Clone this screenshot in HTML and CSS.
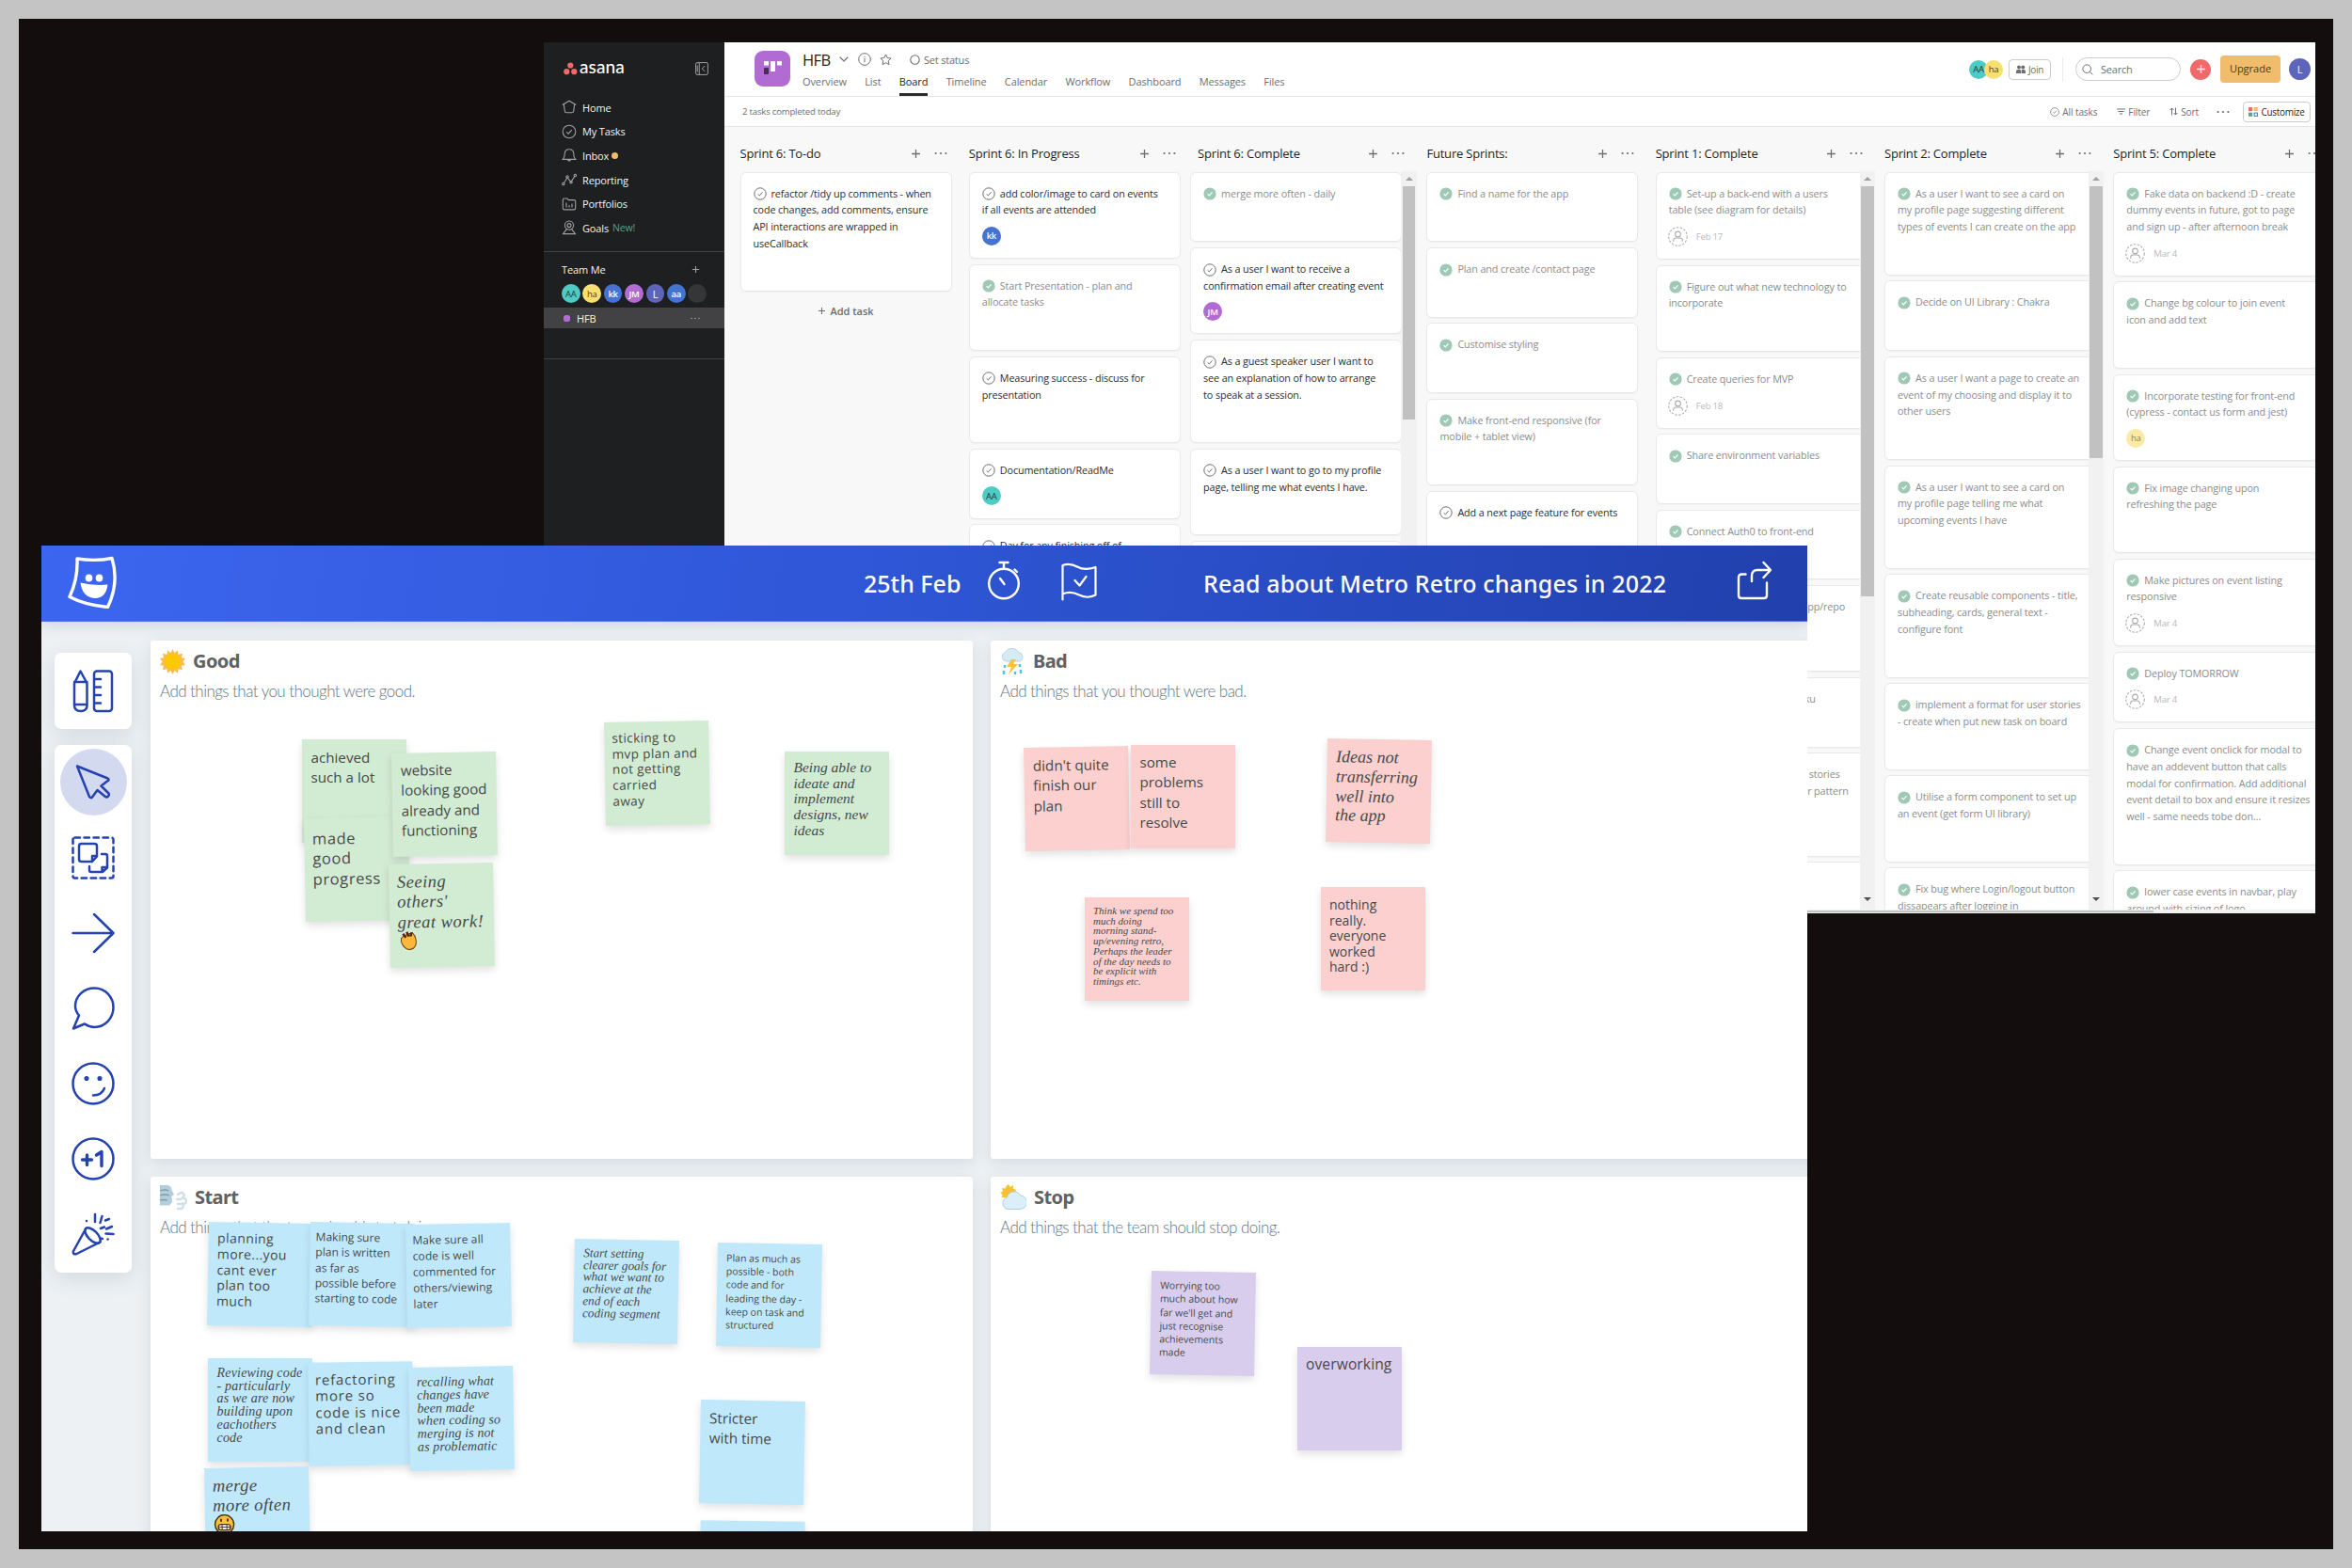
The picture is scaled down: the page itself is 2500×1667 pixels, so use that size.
FILE: index.html
```html
<!DOCTYPE html>
<html lang="en">
<head>
<meta charset="utf-8">
<title>Sprint board and retro</title>
<link rel="stylesheet" href="styles.css">
</head>
<body>
<svg class="defs" aria-hidden="true">
  <symbol id="todo" viewBox="0 0 14 14"><circle cx="7" cy="7" r="6.2" fill="none" stroke="#6d6e6f" stroke-width="1"/><path d="M4.6 7.3l1.7 1.6 3.2-3.6" fill="none" stroke="#6d6e6f" stroke-width="1"/></symbol>
  <symbol id="done" viewBox="0 0 14 14"><circle cx="7" cy="7" r="6.6" fill="#9fc9b5"/><path d="M4.6 7.3l1.7 1.6 3.2-3.6" fill="none" stroke="#fff" stroke-width="1.2"/></symbol>
  <symbol id="person" viewBox="0 0 20 20"><circle cx="10" cy="10" r="9.3" fill="none" stroke="#a9aaab" stroke-width="1" stroke-dasharray="2.4 1.4"/><circle cx="10" cy="7.6" r="2.7" fill="none" stroke="#a9aaab"/><path d="M5.4 15v-1.2a2.6 2.6 0 0 1 2.6-2.4h4a2.6 2.6 0 0 1 2.6 2.4V15" fill="none" stroke="#a9aaab"/></symbol>
  <symbol id="plus" viewBox="0 0 12 12"><path d="M6 1.2v9.6M1.2 6h9.6" stroke="currentColor" stroke-width="1.4" fill="none"/></symbol>
  <symbol id="dots" viewBox="0 0 14 4"><circle cx="1.6" cy="2" r="1.1" fill="currentColor"/><circle cx="7" cy="2" r="1.1" fill="currentColor"/><circle cx="12.4" cy="2" r="1.1" fill="currentColor"/></symbol>
</svg>

<main class="frame">

<section class="asana">
  <aside class="side">
    <div class="brand">
      <svg class="brand-mark" width="15" height="14" viewBox="0 0 15 14"><circle cx="7.3" cy="3.5" r="3.1" fill="#f06a6a"/><circle cx="3.3" cy="10.2" r="3.1" fill="#f06a6a"/><circle cx="11.3" cy="10.2" r="3.1" fill="#f06a6a"/></svg>
      <span class="brand-name">asana</span>
      <svg class="collapse" width="14" height="14" viewBox="0 0 14 14" fill="none" stroke="#a2a0a2"><rect x=".6" y=".6" width="12.8" height="12.8" rx="1.5"/><path d="M4.2.6v12.8M2.2 3.5v7M10.2 4L7.2 7l3 3"/></svg>
    </div>
    <nav class="menu">
      <a><svg width="16" height="16" viewBox="0 0 16 16"><path d="M.8 5.4L8 1.2l7.2 4.2M2.3 4.8l1 7.4q.2 1.6 1.8 1.6h5.8q1.6 0 1.8-1.6l1-7.4"/></svg>Home</a>
      <a><svg width="16" height="16" viewBox="0 0 16 16"><circle cx="8" cy="8" r="6.8"/><path d="M5.2 8.3l1.9 1.8 3.7-4"/></svg>My Tasks</a>
      <a><svg width="16" height="16" viewBox="0 0 16 16"><path d="M1.2 12.4q2-1.6 2-5.4 0-5.2 4.8-5.2T12.800 7q0 3.800 2 5.400zM6.200 12.600q1.800 2.600 3.600 0"/></svg>Inbox<i class="unread"></i></a>
      <a><svg width="16" height="16" viewBox="0 0 16 16"><path d="M2.300 11.800L6 5.800l4 4.500 4-6"/><circle cx="1.800" cy="12.400" r="1.200"/><circle cx="6" cy="5" r="1.200"/><circle cx="10" cy="10.800" r="1.200"/><circle cx="14.300" cy="3.500" r="1.200"/></svg>Reporting</a>
      <a><svg width="16" height="16" viewBox="0 0 16 16"><path d="M1.300 4V3.500q0-1.500 1.500-1.500h3l1.500 1.600h5.700q1.700 0 1.700 1.600v7q0 1.700-1.700 1.700H3q-1.700 0-1.700-1.700zM5 6.500v5M8 9v2.500M11 7.500v4"/></svg>Portfolios</a>
      <a><svg width="16" height="16" viewBox="0 0 16 16"><circle cx="8" cy="5.600" r="4.600"/><circle cx="8" cy="5.600" r="2"/><path d="M5.500 9.400L1.500 14.600h13L10.500 9.400"/></svg>Goals<em>New!</em></a>
    </nav>
    <div class="team">
      <div class="team-head"><span>Team Me</span><svg width="9" height="9"><use href="#plus"/></svg></div>
      <div class="people">
        <span class="av teal">AA</span><span class="av yellow">ha</span><span class="av blue">kk</span><span class="av violet">JM</span><span class="av indigo">L</span><span class="av blue">aa</span><span class="av ghost"></span>
      </div>
      <div class="project"><i></i><span>HFB</span><svg width="10" height="3"><use href="#dots"/></svg></div>
    </div>
  </aside>

  <div class="work">
    <header class="top">
      <svg class="tile" width="38" height="38" viewBox="0 0 38 38"><rect width="38" height="38" rx="9" fill="#b36bd4"/><rect x="10" y="11" width="5" height="4.500" fill="#fff"/><rect x="10" y="18" width="5" height="7" rx=".8" fill="#4a2a5c"/><rect x="17" y="11" width="5" height="11" fill="#fff"/><rect x="24" y="11" width="5" height="4.500" fill="#fff"/></svg>
      <div class="heading">
        <div class="title-row">
          <h1>HFB</h1>
          <svg class="chev" width="10" height="6" viewBox="0 0 10 6"><path d="M.7.7L5 4.900 9.300.7" fill="none" stroke="#6d6e6f" stroke-width="1.200"/></svg>
          <svg class="info" width="14" height="14" viewBox="0 0 14 14" fill="none" stroke="#6d6e6f"><circle cx="7" cy="7" r="6.300"/><path d="M7 6v4.300M7 3.700v1.200"/></svg>
          <svg class="star" width="13" height="13" viewBox="0 0 13 13"><path d="M6.500.9l1.700 3.600 3.900.5-2.900 2.700.8 3.900-3.500-1.900L3 11.600l.8-3.900L.9 5l3.900-.5z" fill="none" stroke="#6d6e6f" stroke-linejoin="round"/></svg>
          <svg class="ring" width="11" height="11" viewBox="0 0 11 11"><circle cx="5.500" cy="5.500" r="4.700" fill="none" stroke="#6d6e6f" stroke-width="1.100"/></svg>
          <span class="status">Set status</span>
        </div>
        <div class="tabs"><a>Overview</a><a>List</a><a class="on">Board</a><a>Timeline</a><a>Calendar</a><a>Workflow</a><a>Dashboard</a><a>Messages</a><a>Files</a></div>
      </div>
      <div class="actions">
        <span class="av teal">AA</span><span class="av yellow lap">ha</span>
        <span class="join"><svg width="10" height="10" viewBox="0 0 10 10" fill="#6d6e6f"><circle cx="3" cy="2.500" r="2"/><circle cx="7.300" cy="2.500" r="2"/><path d="M0 9V7q0-2 2-2h2q1 0 1 1.500V9zM5.600 9V6q0-1 1-1H8q2 0 2 2v2z"/></svg>Join</span>
        <i class="rule"></i>
        <span class="search"><svg width="12" height="12" viewBox="0 0 12 12"><circle cx="5.200" cy="5.200" r="4.300" fill="none" stroke="#6d6e6f"/><path d="M8.300 8.300l3 3" stroke="#6d6e6f"/></svg>Search</span>
        <span class="add"><svg width="11" height="11"><use href="#plus"/></svg></span>
        <span class="upgrade">Upgrade</span>
        <span class="av indigo me">L</span>
      </div>
    </header>
    <div class="bar">
      <span class="count">2 tasks completed today</span>
      <div class="filters">
        <span><svg width="10" height="10"><use href="#todo"/></svg>All tasks</span>
        <span class="f2"><svg width="9" height="8" viewBox="0 0 9 8"><path d="M0 1h9M1.500 3.500h6M3 6h3" stroke="#6d6e6f"/></svg>Filter</span>
        <span class="f3"><svg width="9" height="9" viewBox="0 0 9 9"><path d="M2.500 8.500V1M.5 3l2-2 2 2M6.500.5V8M4.700 6l1.800 2 2-2" fill="none" stroke="#6d6e6f"/></svg>Sort</span>
        <svg class="more" width="14" height="4"><use href="#dots"/></svg>
        <span class="custom"><svg width="10" height="10" viewBox="0 0 10 10"><rect width="4.200" height="4.200" fill="#f06a6a"/><rect x="5.600" width="4.200" height="4.200" fill="#f1bd6c"/><rect y="5.600" width="4.200" height="4.200" fill="#5da283"/><rect x="6.100" y="6.100" width="3.300" height="3.300" fill="none" stroke="#4573d2"/></svg>Customize</span>
      </div>
    </div>

    <div class="board">
      <section class="col">
        <h2>Sprint 6: To-do<svg class="p" width="11" height="11"><use href="#plus"/></svg><svg class="d" width="14" height="4"><use href="#dots"/></svg></h2>
        <div class="lane"><div class="cards">
          <article class="tall"><p><svg><use href="#todo"/></svg>refactor /tidy up comments - when<br>code changes, add comments, ensure<br>API interactions are wrapped in<br>useCallback</p></article>
          <div class="addtask"><svg width="9" height="9"><use href="#plus"/></svg>Add task</div>
        </div></div>
      </section>
      <section class="col">
        <h2>Sprint 6: In Progress<svg class="p" width="11" height="11"><use href="#plus"/></svg><svg class="d" width="14" height="4"><use href="#dots"/></svg></h2>
        <div class="lane"><div class="cards">
          <article><p><svg><use href="#todo"/></svg>add color/image to card on events<br>if all events are attended</p><footer><span class="av blue">kk</span></footer></article>
          <article class="dim"><p><svg><use href="#done"/></svg>Start Presentation - plan and<br>allocate tasks</p><footer></footer></article>
          <article><p><svg><use href="#todo"/></svg>Measuring success - discuss for<br>presentation</p><footer></footer></article>
          <article><p><svg><use href="#todo"/></svg>Documentation/ReadMe</p><footer><span class="av teal">AA</span></footer></article>
          <article><p><svg><use href="#todo"/></svg>Day for any finishing off of</p><footer></footer></article>
        </div></div>
      </section>
      <section class="col shift">
        <h2>Sprint 6: Complete<svg class="p" width="11" height="11"><use href="#plus"/></svg><svg class="d" width="14" height="4"><use href="#dots"/></svg></h2>
        <div class="lane"><div class="cards">
          <article class="dim"><p><svg><use href="#done"/></svg>merge more often - daily</p><footer></footer></article>
          <article><p><svg><use href="#todo"/></svg>As a user I want to receive a<br>confirmation email after creating event</p><footer><span class="av violet">JM</span></footer></article>
          <article><p><svg><use href="#todo"/></svg>As a guest speaker user I want to<br>see an explanation of how to arrange<br>to speak at a session.</p><footer></footer></article>
          <article><p><svg><use href="#todo"/></svg>As a user I want to go to my profile<br>page, telling me what events I have.</p><footer></footer></article>
          <article><p></p><footer></footer></article>
        </div><div class="track"><i class="up"></i><i class="thumb t1"></i></div></div>
      </section>
      <section class="col">
        <h2>Future Sprints:<svg class="p" width="11" height="11"><use href="#plus"/></svg><svg class="d" width="14" height="4"><use href="#dots"/></svg></h2>
        <div class="lane"><div class="cards">
          <article class="dim"><p><svg><use href="#done"/></svg>Find a name for the app</p><footer></footer></article>
          <article class="dim"><p><svg><use href="#done"/></svg>Plan and create /contact page</p><footer></footer></article>
          <article class="dim"><p><svg><use href="#done"/></svg>Customise styling</p><footer></footer></article>
          <article class="dim"><p><svg><use href="#done"/></svg>Make front-end responsive (for<br>mobile + tablet view)</p><footer></footer></article>
          <article><p><svg><use href="#todo"/></svg>Add a next page feature for events</p><footer></footer></article>
        </div></div>
      </section>
      <section class="col cut">
        <h2>Sprint 1: Complete<svg class="p" width="11" height="11"><use href="#plus"/></svg><svg class="d" width="14" height="4"><use href="#dots"/></svg></h2>
        <div class="lane"><div class="cards">
          <article class="dim"><p><svg><use href="#done"/></svg>Set-up a back-end with a users<br>table (see diagram for details)</p><footer class="date"><svg class="who"><use href="#person"/></svg>Feb 17</footer></article>
          <article class="dim"><p><svg><use href="#done"/></svg>Figure out what new technology to<br>incorporate</p><footer></footer></article>
          <article class="dim"><p><svg><use href="#done"/></svg>Create queries for MVP</p><footer class="date"><svg class="who"><use href="#person"/></svg>Feb 18</footer></article>
          <article class="dim"><p><svg><use href="#done"/></svg>Share environment variables</p><footer></footer></article>
          <article class="dim"><p><svg><use href="#done"/></svg>Connect Auth0 to front-end</p><footer></footer></article>
          <article class="dim"><p class="tail r1">app/repo<br>&nbsp;</p><footer></footer></article>
          <article class="dim"><p class="tail r2">ku</p><footer></footer></article>
          <article class="dim"><p class="tail r3"><span>stories</span><br>r pattern<br>&nbsp;</p><footer></footer></article>
          <article class="dim"><p></p><footer></footer></article>
        </div><div class="track"><i class="up"></i><i class="thumb t2"></i><i class="down"></i></div></div>
      </section>
      <section class="col cut">
        <h2>Sprint 2: Complete<svg class="p" width="11" height="11"><use href="#plus"/></svg><svg class="d" width="14" height="4"><use href="#dots"/></svg></h2>
        <div class="lane"><div class="cards">
          <article class="dim"><p><svg><use href="#done"/></svg>As a user I want to see a card on<br>my profile page suggesting different<br>types of events I can create on the app</p><footer></footer></article>
          <article class="dim"><p><svg><use href="#done"/></svg>Decide on UI Library : Chakra</p><footer></footer></article>
          <article class="dim"><p><svg><use href="#done"/></svg>As a user I want a page to create an<br>event of my choosing and display it to<br>other users</p><footer></footer></article>
          <article class="dim"><p><svg><use href="#done"/></svg>As a user I want to see a card on<br>my profile page telling me what<br>upcoming events I have</p><footer></footer></article>
          <article class="dim"><p><svg><use href="#done"/></svg>Create reusable components - title,<br>subheading, cards, general text -<br>configure font</p><footer></footer></article>
          <article class="dim"><p><svg><use href="#done"/></svg>implement a format for user stories<br>- create when put new task on board</p><footer></footer></article>
          <article class="dim"><p><svg><use href="#done"/></svg>Utilise a form component to set up<br>an event (get form UI library)</p><footer></footer></article>
          <article class="dim"><p><svg><use href="#done"/></svg>Fix bug where Login/logout button<br>dissapears after logging in</p><footer></footer></article>
        </div><div class="track"><i class="up"></i><i class="thumb t3"></i><i class="down"></i></div></div>
      </section>
      <section class="col">
        <h2>Sprint 5: Complete<svg class="p" width="11" height="11"><use href="#plus"/></svg><svg class="d" width="14" height="4"><use href="#dots"/></svg></h2>
        <div class="lane"><div class="cards">
          <article class="dim"><p><svg><use href="#done"/></svg>Fake data on backend :D - create<br>dummy events in future, got to page<br>and sign up - after afternoon break</p><footer class="date"><svg class="who"><use href="#person"/></svg>Mar 4</footer></article>
          <article class="dim"><p><svg><use href="#done"/></svg>Change bg colour to join event<br>icon and add text</p><footer></footer></article>
          <article class="dim"><p><svg><use href="#done"/></svg>Incorporate testing for front-end<br>(cypress - contact us form and jest)</p><footer><span class="av yellow faint">ha</span></footer></article>
          <article class="dim"><p><svg><use href="#done"/></svg>Fix image changing upon<br>refreshing the page</p><footer></footer></article>
          <article class="dim"><p><svg><use href="#done"/></svg>Make pictures on event listing<br>responsive</p><footer class="date"><svg class="who"><use href="#person"/></svg>Mar 4</footer></article>
          <article class="dim"><p><svg><use href="#done"/></svg>Deploy TOMORROW</p><footer class="date"><svg class="who"><use href="#person"/></svg>Mar 4</footer></article>
          <article class="dim"><p><svg><use href="#done"/></svg>Change event onclick for modal to<br>have an addevent button that calls<br>modal for confirmation. Add additional<br>event detail to box and ensure it resizes<br>well - same needs tobe don...</p><footer></footer></article>
          <article class="dim"><p><svg><use href="#done"/></svg>lower case events in navbar, play<br>around with sizing of logo</p><footer></footer></article>
        </div></div>
      </section>
    </div>
    <div class="hscroll"><i></i></div>
  </div>
</section>

<section class="retro">
  <header class="rhead">
    <svg class="rlogo" width="54" height="56" viewBox="0 0 54 56"><path d="M10 3q19 3 37-.5 8 26-4.500 52Q18 52 2 43.500 11 24 10 3z" fill="none" stroke="#fff" stroke-width="3.400" stroke-linejoin="round"/><ellipse cx="22.500" cy="23.500" rx="3.800" ry="4" fill="#fff"/><ellipse cx="33.500" cy="23.500" rx="3.800" ry="4" fill="#fff"/><path d="M13.500 28.500q14 3.500 29 2-2 15-14 14.500-13-1-15-16.500z" fill="#fff"/></svg>
    <span class="rdate">25th Feb</span>
    <svg class="watch" width="36" height="42" viewBox="0 0 36 42" fill="none" stroke="#fff" stroke-width="2.400" stroke-linecap="round"><circle cx="18" cy="24.500" r="15.800"/><path d="M13.500 2h9M18 2v6.500M29.500 9.500l2.500 2.500M14 19l4.500 6"/></svg>
    <svg class="map" width="38" height="41" viewBox="0 0 38 41" fill="none" stroke="#fff" stroke-width="2.200" stroke-linecap="round" stroke-linejoin="round"><path d="M1.500 39.500V3Q9 0 17 4.500T36.500 5V34.500Q28 39 19 34.500T1.500 33.500M14.500 19l5 5.500 7-9.500"/></svg>
    <span class="rnews">Read about Metro Retro changes in 2022</span>
    <svg class="share" width="38" height="42" viewBox="0 0 38 42" fill="none" stroke="#fff" stroke-width="2.400" stroke-linecap="round" stroke-linejoin="round"><path d="M9.500 14.500H5.500Q2 14.500 2 18v19q0 3 3 3h24q3 0 3-3V23.500M16 22v-6q0-6 6-6h13.500M28.500 2l7.500 8-7.500 8"/></svg>
  </header>
  <div class="canvas">
    <div class="tools">
      <div class="tbox one">
        <svg width="46" height="46" viewBox="0 0 46 46"><path d="M3 14.500L9.500 1.500 16.500 14.500V38q0 6-6.700 6T3 38zM3 13h13.500M3 37h13.500"/><rect x="24" y="1.500" width="19" height="42.500" rx="3"/><path d="M25 10h6M25 18.500h6M25 27h6M25 35.500h6"/></svg>
      </div>
      <div class="tbox many">
        <span class="tool sel"><svg width="46" height="46" viewBox="0 0 46 46"><path d="M6 5.500L38.500 18.500Q41 20 38 21.500L31.500 26.500 39.500 34.500Q40.500 36 39 37.500 37.500 39 36 38L27.500 31 22 38.500Q20.500 40 19 38z"/></svg></span>
        <span class="tool"><svg width="46" height="46" viewBox="0 0 46 46"><rect x="1.500" y="1.500" width="43" height="43" rx="2" stroke-dasharray="5.500 4.500"/><path d="M10.500 8h14q2.500 0 2.500 2.500v11L22 27H10.500Q8 27 8 24.500v-14Q8 8 10.500 8zM22 26v-5h5M32 19h4q2 0 2 2v12.500L33 38H21q-2 0-2-2v-4M32.500 38v-5H38"/></svg></span>
        <span class="tool"><svg width="46" height="46" viewBox="0 0 46 46"><path d="M1.500 23H44M24 3l20.500 20L24 43"/></svg></span>
        <span class="tool"><svg width="46" height="46" viewBox="0 0 46 46"><path d="M2 44.500l6-14Q4 26 4 20.500C4 10 13 1.500 24.500 1.500S44.500 11 44.500 22 36 43 24.500 43q-5.500 0-10.500-3.500z"/></svg></span>
        <span class="tool"><svg width="46" height="46" viewBox="0 0 46 46"><circle cx="23" cy="23" r="21.500"/><path d="M23 35.500q9 0 12-7.500"/><circle class="f" cx="16" cy="17.500" r="1.300"/><circle class="f" cx="30" cy="17.500" r="1.300"/></svg></span>
        <span class="tool"><svg width="46" height="46" viewBox="0 0 46 46"><circle cx="23" cy="23" r="21.500"/><path d="M11.500 24h10M16.500 19v10.500M26.500 19l5.500-3.500V30.500" stroke-width="3.400"/></svg></span>
        <span class="tool"><svg width="46" height="46" viewBox="0 0 46 46"><path d="M14.500 18.500L1.800 41.500Q1.500 45 5.500 44L30.500 31.500"/><ellipse cx="22.500" cy="24.500" rx="5" ry="10.500" transform="rotate(-45 22.500 24.500)"/><path d="M25 2v8M32.500 4l-2 7M16 9v.1M40 7l-4 1.500M31 17l4-1.500M37 17.500l6-2.500M36.500 22.500l8 .5M32 27.500l1 .5M38.500 28.500h.2"/></svg></span>
      </div>
    </div>
    <div class="panels">
      <section class="panel">
        <h3><svg width="27" height="27" viewBox="0 0 27 27"><path d="M13.500 0l2 4L19 1.300l.5 4.500 4.500-1-1 4.400 4 .8-2.500 3.500 2.500 3.500-4.300.8L24 22.200l-4.500-1-.5 4.500-3.500-2.700-2 4-2-4L8 25.700l-.5-4.500-4.500 1 1-4.400L0 17l2.500-3.500L0 10l4-.8-1-4.400 4.500 1L8 1.300 11.500 4z" fill="#f9bd4e"/><circle cx="13.500" cy="13.500" r="8.300" fill="#fdc900"/></svg>Good</h3>
        <p>Add things that you thought were good.</p>
      </section>
      <section class="panel">
        <h3><svg width="27" height="29" viewBox="0 0 27 29"><path d="M6 14a5 5 0 0 1-.5-9.500 8 8 0 0 1 14 0 5 5 0 0 1 1.500 9.500z" fill="#d8ebf4" stroke="#b5d3e2"/><path d="M12 12l-5 8h5l-3 8 10-11h-5l3-5z" fill="#fdc23c"/><path d="M5 18v3M4 24v4M21 17v3M22 23v4M16 25v3" stroke="#4fc3ee" stroke-width="2.500"/></svg>Bad</h3>
        <p>Add things that you thought were bad.</p>
      </section>
      <section class="panel">
        <h3><svg width="29" height="28" viewBox="0 0 29 28"><path d="M0 1h7q5 0 5.500 5l2.500 5-2.500 2 .5 6-3 3.500H0z" fill="#b3cddb"/><path d="M0 7q6-2 9 0M0 12q6-2 10 0M0 17q5-1 8 0" stroke="#7e9dad" fill="none" stroke-width="1.300"/><path d="M19 11q4-3.500 6-1t-2 5q5-1 5 3t-5 2q3 2 1 5M18 16h4M19 21h3M19 26h4" fill="none" stroke="#cfdfe7" stroke-width="2.400" stroke-linecap="round"/></svg>Start</h3>
        <p>Add things that the team should start doing.</p>
      </section>
      <section class="panel">
        <h3><svg width="28" height="28" viewBox="0 0 28 28"><path d="M9 0l1.500 3L14 1l-.3 3.600L17 6l-3 8H4L1.500 14l1.200-3L0 9l3-1.500L2 4l3.500.6L7 1.500z" fill="#fbc02d"/><path d="M8 26.500a6.500 6.500 0 0 1-.5-12.500 7.500 7.500 0 0 1 14-2A7 7 0 0 1 21 26.500z" fill="#dceff8" stroke="#a9d0e4"/></svg>Stop</h3>
        <p>Add things that the team should stop doing.</p>
      </section>
    </div>

    <div class="note green n1">achieved<br>such a lot</div>
    <div class="note green n2">made<br>good<br>progress</div>
    <div class="note green n3">website<br>looking good<br>already and<br>functioning</div>
    <div class="note green hand n4">Seeing<br>others'<br>great work!<br><svg width="22" height="22" viewBox="0 0 22 22"><path d="M3 8Q5 5 9 4l6-2q3 3 3.500 7 1.500 6-2.500 9.500-5 3-9-.5Q2.500 14 3 8z" fill="#fbb83a" stroke="#6b3a12"/><path d="M5 3l3 4M9 1l2 5M14 2l-1 4" stroke="#5a1f10" stroke-width="2.500"/></svg></div>
    <div class="note green n5">sticking to<br>mvp plan and<br>not getting<br>carried<br>away</div>
    <div class="note green hand n6">Being able to<br>ideate and<br>implement<br>designs, new<br>ideas</div>

    <div class="note pink n7">didn't quite<br>finish our<br>plan</div>
    <div class="note pink n8">some<br>problems<br>still to<br>resolve</div>
    <div class="note pink hand n9">Ideas not<br>transferring<br>well into<br>the app</div>
    <div class="note pink hand n10">Think we spend too<br>much doing<br>morning stand-<br>up/evening retro,<br>Perhaps the leader<br>of the day needs to<br>be explicit with<br>timings etc.</div>
    <div class="note pink n11">nothing<br>really.<br>everyone<br>worked<br>hard :)</div>

    <div class="note sky n12">planning<br>more...you<br>cant ever<br>plan too<br>much</div>
    <div class="note sky n13">Making sure<br>plan is written<br>as far as<br>possible before<br>starting to code</div>
    <div class="note sky n14">Make sure all<br>code is well<br>commented for<br>others/viewing<br>later</div>
    <div class="note sky hand n15">Start setting<br>clearer goals for<br>what we want to<br>achieve at the<br>end of each<br>coding segment</div>
    <div class="note sky n16">Plan as much as<br>possible - both<br>code and for<br>leading the day -<br>keep on task and<br>structured</div>
    <div class="note sky hand n17">Reviewing code<br>- particularly<br>as we are now<br>building upon<br>eachothers<br>code</div>
    <div class="note sky n18">refactoring<br>more so<br>code is nice<br>and clean</div>
    <div class="note sky hand n19">recalling what<br>changes have<br>been made<br>when coding so<br>merging is not<br>as problematic</div>
    <div class="note sky hand n20">merge<br>more often<br><svg width="23" height="22" viewBox="0 0 23 22"><circle cx="11.500" cy="11" r="10" fill="#fdc13a" stroke="#4a3517" stroke-width="1.500"/><path d="M8 5v3M15 5v3" stroke="#4a3517" stroke-width="2"/><rect x="5" y="11" width="13" height="6" rx="3" fill="#fff" stroke="#4a3517" stroke-width="1.300"/><path d="M5 14h13M9 11v6M14 11v6" stroke="#4a3517"/></svg></div>
    <div class="note sky n21">Stricter<br>with time</div>
    <div class="note sky n22"></div>

    <div class="note lilac n23">Worrying too<br>much about how<br>far we'll get and<br>just recognise<br>achievements<br>made</div>
    <div class="note lilac n24">overworking</div>
  </div>
</section>

</main>
</body>
</html>
```
FILE: styles.css
```css
* { box-sizing: border-box; }
body { margin: 0; padding: 20px; width: 2500px; height: 1667px; overflow: hidden; background: #c4c4c4; font-family: "Open Sans", "Noto Sans", sans-serif; }
h1, h2, h3, p { margin: 0; font-weight: 400; }
.defs { position: absolute; width: 0; height: 0; }
.frame { position: relative; width: 2460px; height: 1627px; background: #130d0d; overflow: hidden; }

/* Overlapping windows */
.asana { position: absolute; left: 558px; top: 25px; width: 1883px; height: 926px; display: flex; overflow: hidden; background: #f8f8f8; }
.retro { position: absolute; left: 24px; top: 560px; width: 1877px; height: 1048px; overflow: hidden; background: #edf1f4; }

/* Sidebar */
.side { flex: none; width: 192px; background: #1e1f21; color: #f5f4f3; font-size: 11px; letter-spacing: -0.15px; }
.brand { display: flex; align-items: center; height: 56.500px; padding: 0 17px 0 21px; }
.brand-name { margin-left: 2px; margin-top: -5px; font: 500 19px/20px "Lato", sans-serif; letter-spacing: .1px; color: #fff; }
.collapse { margin-left: auto; }
.menu a { display: flex; align-items: center; height: 25.6px; padding-left: 19px; font-weight: 500; }
.menu svg { width: 16px; margin-right: 6px; fill: none; stroke: #a2a0a2; stroke-width: 1.1; }
.menu em { margin-left: 4px; font-style: normal; font-size: 10.5px; font-weight: 400; color: #58a182; }
.unread { width: 7px; height: 7px; margin-left: 3px; border-radius: 50%; background: #f1bd6c; }
.team { height: 115px; margin-top: 12px; border-top: 1px solid #424244; border-bottom: 1px solid #424244; }
.team-head { display: flex; align-items: center; justify-content: space-between; height: 34px; padding: 2px 26px 0 19px; font-weight: 500; }
.team-head svg { color: #a2a0a2; }
.people { display: flex; gap: 2.800px; height: 25px; padding: 0 19px; }
.people .av { width: 19.6px; }
.project { display: flex; align-items: center; height: 22px; padding: 0 26px 0 21px; background: #424244; font-weight: 500; }
.project i { width: 7px; height: 7px; margin-right: 7px; border-radius: 2.500px; background: #b36bd4; }
.project svg { margin-left: auto; color: #a2a0a2; }

.av { flex: none; display: inline-flex; align-items: center; justify-content: center; width: 20px; height: 20px; border-radius: 50%; font-size: 9.500px; font-weight: 400; letter-spacing: -0.3px; color: #fff; }
.teal { background: #4ecbc4; color: #1e3b3a; }
.yellow { background: #f8df72; color: #4d4420; }
.blue { background: #4573d2; font-weight: 600; }
.violet { background: #b36bd4; font-weight: 600; }
.indigo { background: #5d65bb; font-size: 11px; }
.ghost { background: #353638; }
.faint { opacity: .65; }

/* Top bar */
.work { flex: 1; min-width: 0; display: flex; flex-direction: column; color: #6d6e6f; }
.top { display: flex; height: 58px; padding-left: 32px; background: #fff; border-bottom: 1px solid #e8e6e6; }
.tile { flex: none; margin-top: 9px; }
.heading { flex: none; margin-left: 13px; display: flex; flex-direction: column; justify-content: space-between; }
.title-row { display: flex; align-items: center; height: 37px; }
.title-row h1 { width: 29px; font-size: 16.500px; letter-spacing: -.6px; color: #1e1f21; }
.chev { margin-left: 10px; }
.info { margin-left: 10px; }
.star { margin-left: 9px; }
.ring { margin-left: 19px; }
.status { margin-left: 4px; font-size: 11px; letter-spacing: -.2px; }
.tabs { display: flex; gap: 19.300px; height: 21px; font-size: 11px; letter-spacing: -.1px; line-height: 12px; }
.tabs .on { color: #1e1f21; border-bottom: 3px solid #2a2b2d; }
.actions { display: flex; align-items: center; margin-left: auto; padding-right: 5px; font-size: 10px; }
.lap { margin-left: -4px; }
.join { display: flex; align-items: center; justify-content: center; gap: 3px; width: 45px; height: 22px; margin-left: 6px; border: 1px solid #cfcbcb; border-radius: 4px; letter-spacing: -.3px; }
.rule { width: 1px; height: 26px; margin: 0 13px 0 12px; background: #edeae9; }
.search { display: flex; align-items: center; gap: 8px; width: 112px; height: 25px; padding-left: 6px; border: 1px solid #cfcbcb; border-radius: 13px; font-size: 11px; letter-spacing: -.2px; }
.add { display: flex; align-items: center; justify-content: center; width: 22px; height: 22px; margin-left: 10px; border-radius: 50%; background: #f06a6a; color: #fff; }
.upgrade { width: 64px; height: 29px; margin-left: 10px; border-radius: 4px; background: #f1bd6c; color: #4a3a1a; font-size: 11px; line-height: 28px; text-align: center; }
.me { width: 23px; height: 23px; margin-left: 9px; }
.bar { display: flex; align-items: center; justify-content: space-between; height: 33px; padding: 0 5px 0 19px; background: #fff; border-bottom: 1px solid #e8e6e6; font-size: 9.600px; letter-spacing: -.2px; }
.filters { display: flex; align-items: center; font-size: 10px; letter-spacing: -.1px; }
.filters span { display: flex; align-items: center; gap: 3px; }
.filters .f2 { margin-left: 21px; }
.filters .f3 { margin-left: 21px; }
.more { margin: 0 14px 0 19px; }
.filters .custom { justify-content: center; width: 72px; height: 22px; border: 1px solid #cfcbcb; border-radius: 4px; letter-spacing: -.3px; color: #1e1f21; }

/* Board */
.board { flex: none; display: flex; height: 832px; padding-left: 16.500px; }
.col { flex: none; width: 243.300px; }
.col h2 { display: flex; align-items: center; height: 47px; padding: 9px 13px 0 0; font-size: 13px; letter-spacing: -.2px; color: #1e1f21; white-space: nowrap; }
.col h2 svg { color: #6d6e6f; }
.p { margin-left: auto; }
.d { margin: 0 10px 0 14px; }
.lane { display: flex; height: 785px; overflow: hidden; }
.cards { flex: none; width: 225px; }
.shift .cards { width: 224px; }
.cut .cards { width: 217px; overflow: hidden; }
article { width: 225px; padding: 13px 0 0 13px; margin-bottom: 5.700px; background: #fff; border: 1px solid #e9e8e8; border-radius: 6px; box-shadow: 0 1px 1px rgba(0,0,0,.03); }
article:first-child { margin-top: .5px; }
.shift .lane { margin-left: -8px; }
article p { min-height: 17.700px; font-size: 10.800px; line-height: 17.700px; letter-spacing: -.12px; color: #2b2c2e; white-space: nowrap; }
article p svg { width: 14px; height: 14px; margin-right: 5px; vertical-align: -3.500px; }
article footer { display: flex; align-items: center; height: 42px; padding-bottom: 4.500px; font-size: 9.600px; letter-spacing: -.2px; color: #b9babb; }
article .date { height: 43px; padding-bottom: 4px; }
.who { width: 21px; height: 21px; margin: 0 9px 0 -1px; }
.dim p { color: #8b8c8d; }
.tall { height: 127px; }
.addtask { display: flex; align-items: center; justify-content: center; gap: 4px; margin-top: 13px; font-size: 11px; font-weight: 600; }
.tail { text-align: right; }
.r1 { padding-right: 22.500px; }
.r2 { padding-right: 54px; }
.r3 { padding-right: 19px; }
.r3 span { margin-right: 9px; }
.track { position: relative; flex: none; width: 16.500px; background: #f1f1f1; }
.thumb { position: absolute; left: 1.500px; top: 16px; width: 13.500px; background: #c1c1c1; }
.t1 { height: 248px; }
.t2 { height: 436px; }
.t3 { height: 289px; }
.up, .down { position: absolute; left: 4.500px; border: 4px solid transparent; }
.up { top: 2px; border-bottom-color: #a0a0a0; }
.down { bottom: 5px; border-top-color: #505050; }
.hscroll { height: 4px; background: #f1f1f1; }
.hscroll i { display: block; width: 1519px; height: 2px; margin-top: 1px; background: #c1c1c1; }

/* Retro header */
.rhead { position: relative; z-index: 1; display: flex; align-items: center; height: 81px; padding-left: 28px; background: linear-gradient(100deg, #3c66f0, #2e55d4 50%, #2140ad); border-bottom: 1px solid #5577e4; box-shadow: 0 3px 14px rgba(40,60,90,.16); color: #fff; font-family: "Noto Sans", sans-serif; font-weight: 500; font-size: 25px; white-space: nowrap; }
.rlogo { flex: none; margin-top: -3px; }
.rdate { width: 104px; margin-left: 792px; }
.watch { flex: none; margin: -7px 0 0 27px; }
.map { flex: none; margin: -4px 0 0 43px; }
.rnews { width: 492px; margin-left: 113px; letter-spacing: .16px; }
.share { flex: none; margin: -6px 0 0 75px; }

/* Retro canvas */
.canvas { display: flex; align-items: flex-start; height: 967px; padding-left: 14px; }
.tools { flex: none; width: 82px; padding-top: 33px; }
.tbox { display: flex; flex-direction: column; align-items: center; background: #fff; border-radius: 7px; box-shadow: 0 6px 22px rgba(60,80,100,.15); }
.one { height: 81px; justify-content: center; padding-top: 0; }
.many { height: 561px; margin-top: 17px; padding-top: 4px; gap: 9px; }
.tbox svg { fill: none; stroke: #2443b0; stroke-width: 2.500; stroke-linecap: round; stroke-linejoin: round; }
.tbox .f { fill: #2443b0; }
.tool { display: flex; flex: none; align-items: center; justify-content: center; width: 71px; height: 71px; border-radius: 50%; }
.tool, .one { padding-right: 1px; }
.sel { background: #d3d9ef; }
.panels { flex: none; display: grid; grid-template-columns: 874px 880px; grid-template-rows: 551px 400px; gap: 19px; margin: 20px 0 0 20px; }
.panel { padding: 10px 0 0 10px; background: #fff; border-radius: 3px; box-shadow: 0 4px 16px rgba(60,80,100,.14); }
.panel h3 { display: flex; align-items: center; height: 24px; font: 700 20px/24px "Noto Sans", sans-serif; letter-spacing: -.6px; color: #616161; }
.panel h3 svg { flex: none; margin-right: 8px; }
.panel p { margin-top: 8px; font: 300 17px/24px "Lato", sans-serif; letter-spacing: -.55px; color: #5f7680; }

/* Sticky notes, placed freely on the canvas */
.note { position: absolute; z-index: 2; width: 111px; height: 110px; padding: 9px 0 0 9.500px; font-family: "Open Sans", sans-serif; color: #474a4a; white-space: nowrap; box-shadow: 0 4px 8px rgba(0,0,0,.12); font-size: 15.200px; line-height: 21.400px; }
.green { background: #d2ebd3; }
.pink { background: #fbd0ce; }
.sky { background: #c0e8fb; }
.lilac { background: #d8cdec; }
.hand { font-family: "Liberation Serif", serif; font-style: italic; }
.n1 { left: 277px; top: 206px; }
.n2 { left: 280px; top: 289px; transform: rotate(-1deg); padding-top: 11px; padding-left: 8.500px; font-size: 16.500px; letter-spacing: .6px; }
.n3 { left: 373px; top: 220px; transform: rotate(-1deg); padding-top: 8px; }
.n4 { left: 370px; top: 338px; transform: rotate(-1deg); font-size: 18.500px; letter-spacing: .5px; padding-left: 8.500px; }
.n4 svg { margin-top: -2px; }
.n5 { left: 599px; top: 187px; transform: rotate(-1deg); font-size: 13.500px; letter-spacing: .4px; line-height: 16.700px; padding-left: 8px; }
.n6 { left: 790px; top: 219px; font-size: 15.500px; line-height: 16.700px; }
.n7 { left: 1045px; top: 214px; transform: rotate(-1deg); }
.n8 { left: 1158px; top: 212px; padding-top: 8px; }
.n9 { left: 1366px; top: 206px; transform: rotate(1deg); font-size: 18px; line-height: 20.800px; }
.n10 { left: 1108.500px; top: 374px; font-size: 11px; line-height: 10.700px; }
.n11 { left: 1359.500px; top: 363px; font-size: 14px; line-height: 16.600px; padding-top: 11px; }
.n12 { left: 177px; top: 720px; transform: rotate(1deg); font-size: 14px; letter-spacing: .4px; line-height: 16.800px; }
.n13 { left: 285px; top: 720px; transform: rotate(1deg); font-size: 12px; line-height: 16.300px; padding: 8px 0 0 6px; }
.n14 { left: 388px; top: 721px; transform: rotate(-1deg); font-size: 12px; letter-spacing: .1px; line-height: 17px; padding: 8px 0 0 7px; }
.n15 { left: 566px; top: 738px; transform: rotate(1deg); font-size: 13.200px; line-height: 12.700px; }
.n16 { left: 718px; top: 742px; transform: rotate(1deg); font-size: 10.500px; line-height: 14.200px; }
.n17 { left: 177px; top: 864px; font-size: 14px; letter-spacing: .2px; line-height: 13.700px; }
.n18 { left: 284px; top: 868px; transform: rotate(-.7deg); font-size: 15px; letter-spacing: .8px; line-height: 17.400px; padding-top: 10px; padding-left: 7.500px; }
.n19 { left: 391px; top: 873px; transform: rotate(-1deg); font-size: 14px; letter-spacing: .1px; line-height: 13.800px; padding-left: 8.500px; }
.n20 { left: 174px; top: 980px; transform: rotate(-1deg); font-size: 18.500px; letter-spacing: .4px; padding-left: 8.500px; }
.n20 svg { margin-top: -3px; }
.n21 { left: 700px; top: 909px; transform: rotate(1deg); }
.n22 { left: 700px; top: 1037px; transform: rotate(.7deg); }
.n23 { left: 1179px; top: 772px; transform: rotate(1deg); font-size: 10.500px; line-height: 14.300px; padding-top: 8px; }
.n24 { left: 1334.500px; top: 852px; padding-top: 8px; font-size: 15.600px; letter-spacing: .1px; }
```
